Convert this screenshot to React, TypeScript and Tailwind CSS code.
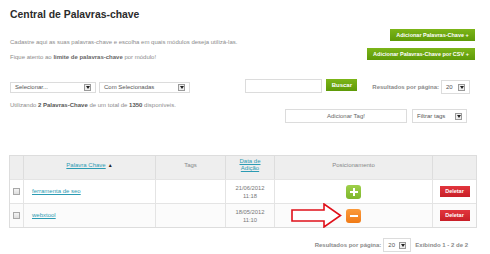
import React from 'react';

const font = { fontFamily: '"Liberation Sans", Arial, sans-serif' };

// pequeno ícone de dropdown (quadrado cinza com triângulo)
const DropIcon: React.FC = () => (
  <span className="flex items-center justify-center w-[7px] h-[7px] border border-[#9a9a9a] bg-[#eeeeee]">
    <svg width="4" height="3" viewBox="0 0 4 3">
      <path d="M0 0 L4 0 L2 3 Z" fill="#222" />
    </svg>
  </span>
);

const Select: React.FC<{ label: string; className: string }> = ({ label, className }) => (
  <div
    className={`flex items-center justify-between border border-[#dcdcdc] bg-white pl-[4px] pr-[4px] text-[6px] text-[#555] ${className}`}
  >
    <span>{label}</span>
    <DropIcon />
  </div>
);

const GreenButton: React.FC<{ label: string; className?: string }> = ({ label, className = '' }) => (
  <div
    className={`flex items-center justify-center h-[12px] bg-gradient-to-b from-[#7cb518] to-[#5e9a08] text-white font-bold text-[5.5px] ${className}`}
  >
    {label}
  </div>
);

const Checkbox: React.FC = () => (
  <span className="block w-[7px] h-[7px] border border-[#a8a8a8] bg-gradient-to-b from-[#f4f4f4] to-[#dedede]" />
);

const DeleteButton: React.FC = () => (
  <div className="flex items-center justify-center w-[30px] h-[11px] bg-gradient-to-b from-[#e2353d] to-[#c81e27] text-white font-bold text-[5.5px]">
    Deletar
  </div>
);

const rows = [
  { keyword: 'ferramenta de seo', date: '21/06/2012', time: '11:18', kind: 'plus' },
  { keyword: 'webxtool', date: '18/05/2012', time: '11:10', kind: 'minus' },
];

export default function App() {
  return (
    <div className="relative w-[490px] h-[254px] bg-white overflow-hidden pl-[10px] pt-[9px]" style={font}>
      {/* Cabeçalho: título e botões verdes */}
      <div className="flex justify-between items-start w-[465px]">
        <div className="flex flex-col">
          <h1 className="h-[12px] leading-[12px] text-[10.4px] font-bold text-[#2b2b2b]">
            Central de Palavras-chave
          </h1>
          <p className="mt-[16px] h-[10px] leading-[10px] text-[6px] text-[#8c8c8c]">
            Cadastre aqui as suas palavras-chave e escolha em quais módulos deseja utilizá-las.
          </p>
          <p className="mt-[5px] h-[10px] leading-[10px] text-[6px] text-[#8c8c8c]">
            Fique atento ao <b className="text-[#666]">limite de palavras-chave</b> por módulo!
          </p>
        </div>
        <div className="flex flex-col items-end mt-[20px] gap-[7px]">
          <GreenButton label="Adicionar Palavras-Chave +" className="w-[85px]" />
          <GreenButton label="Adicionar Palavras-Chave por CSV +" className="w-[108px]" />
        </div>
      </div>

      {/* Linha de filtros */}
      <div className="flex justify-between items-start w-[460px] h-[15px] mt-[17px]">
        <div className="flex items-start gap-[3px] mt-[3px]">
          <Select label="Selecionar..." className="w-[86px] h-[11px]" />
          <Select label="Com Selecionadas" className="w-[91px] h-[11px]" />
        </div>
        <div className="flex items-start">
          <div className="w-[77px] h-[14px] border border-[#dcdcdc] bg-white" />
          <GreenButton label="Buscar" className="ml-[4px] w-[31px] text-[6px]" />
          <span className="ml-[15px] mt-[1px] h-[14px] leading-[14px] text-[6px] font-bold text-[#8a8a8a]">
            Resultados por página:
          </span>
          <Select label="20" className="ml-[2px] mt-[1px] w-[29px] h-[14px]" />
        </div>
      </div>

      <p className="mt-[7px] h-[8px] leading-[8px] text-[6px] text-[#8c8c8c]">
        Utilizando <b className="text-[#555]">2 Palavras-Chave</b> de um total de{' '}
        <b className="text-[#555]">1350</b> disponíveis.
      </p>

      {/* Tags */}
      <div className="flex justify-end items-start w-[457px] h-[14px]">
        <div className="flex items-center justify-center w-[122px] h-[14px] border border-[#dcdcdc] bg-white text-[6px] text-[#666]">
          Adicionar Tag!
        </div>
        <Select label="Filtrar tags" className="ml-[5px] w-[55px] h-[14px]" />
      </div>

      {/* Tabela */}
      <div className="ml-[-1px] mt-[32px] w-[468px] border border-[#dddddd]">
        <div className="flex h-[23px] bg-[#eeeeee] text-[6px] text-[#888]">
          <div className="w-[14px] border-r border-[#dddddd]" />
          <div className="w-[132px] border-r border-[#dddddd] flex justify-center pt-[5px]">
            <span className="text-[#2b9bb3] underline">Palavra Chave</span>
            <span className="ml-[2px] text-[#222] text-[5px] leading-[9px]">▲</span>
          </div>
          <div className="w-[70px] border-r border-[#dddddd] flex justify-center pt-[5px]">Tags</div>
          <div className="w-[49px] border-r border-[#dddddd] flex flex-col items-center pt-[2px] leading-[7px] text-[#2b9bb3] underline">
            <span>Data de</span>
            <span>Adição</span>
          </div>
          <div className="w-[158px] border-r border-[#dddddd] flex justify-center pt-[5px]">Posicionamento</div>
          <div className="flex-1" />
        </div>
        {rows.map((r, i) => (
          <div
            key={r.keyword}
            className={`flex h-[24px] border-t border-[#e4e4e4] ${i === 1 ? 'bg-[#fbfbfb]' : 'bg-white'}`}
          >
            <div className="w-[14px] border-r border-[#e4e4e4] flex items-center justify-center">
              <Checkbox />
            </div>
            <div className="w-[132px] border-r border-[#e4e4e4] flex items-center pl-[8px] text-[6px] text-[#2b9bb3] underline">
              {r.keyword}
            </div>
            <div className="w-[70px] border-r border-[#e4e4e4]" />
            <div className="w-[49px] border-r border-[#e4e4e4] flex flex-col items-center justify-center leading-[8px] text-[5.8px] text-[#777]">
              <span>{r.date}</span>
              <span>{r.time}</span>
            </div>
            <div className="w-[158px] border-r border-[#e4e4e4] flex items-center justify-center">
              {r.kind === 'plus' ? (
                <span className="flex items-center justify-center w-[15px] h-[14px] rounded-[3px] bg-gradient-to-b from-[#9fd04a] to-[#7db62b]">
                  <svg width="8" height="8" viewBox="0 0 8 8">
                    <path d="M3 0h2v3h3v2H5v3H3V5H0V3h3z" fill="#fff" />
                  </svg>
                </span>
              ) : (
                <span className="flex items-center justify-center w-[15px] h-[14px] rounded-[3px] bg-gradient-to-b from-[#fb9a3a] to-[#f07a14]">
                  <svg width="8" height="8" viewBox="0 0 8 8">
                    <rect x="0" y="3" width="8" height="2" fill="#fff" />
                  </svg>
                </span>
              )}
            </div>
            <div className="flex-1 flex items-center justify-center">
              <DeleteButton />
            </div>
          </div>
        ))}
      </div>

      {/* Paginação */}
      <div className="flex justify-end items-center w-[458px] h-[14px] mt-[10px]">
        <span className="text-[6px] font-bold text-[#8a8a8a]">Resultados por página:</span>
        <Select label="20" className="ml-[2px] w-[28px] h-[14px]" />
        <span className="ml-[4px] text-[6px] font-bold text-[#8a8a8a]">Exibindo 1 - 2 de 2</span>
      </div>

      {/* Seta vermelha de destaque */}
      <svg className="absolute left-[291px] top-[203px]" width="51" height="25" viewBox="0 0 51 25">
        <polygon
          points="1,7 33,7 33,1 49.5,12.5 33,24 33,18 1,18"
          fill="white"
          stroke="#e0101a"
          strokeWidth="1.6"
          strokeLinejoin="miter"
        />
      </svg>
    </div>
  );
}
